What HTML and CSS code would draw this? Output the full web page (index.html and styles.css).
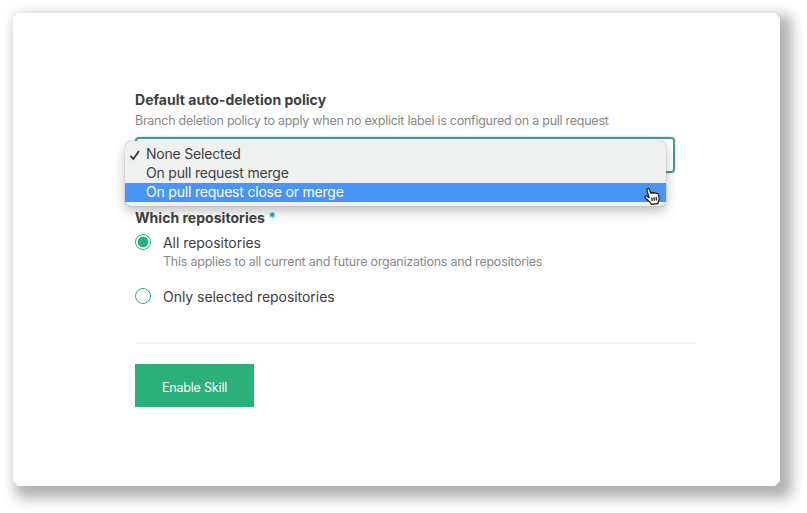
FILE: index.html
```html
<!DOCTYPE html>
<html lang="en">
<head>
<meta charset="utf-8">
<title>Enable Skill</title>
<link rel="stylesheet" href="styles.css">
</head>
<body>
<div class="window">
  <main class="card">
    <form class="form">
      <h2 class="label">Default auto-deletion policy</h2>
      <p class="hint">Branch deletion policy to apply when no explicit label is configured on a pull request</p>
      <div class="select">
        <div class="menu">
          <div class="option"><svg class="check" viewBox="0 0 12 12"><path d="M1.5 6.7 4.3 10 10 2"/></svg>None Selected</div>
          <div class="option">On pull request merge</div>
          <div class="option active">On pull request close or merge</div>
          <svg class="pointer" viewBox="0 0 18 20"><path d="M6.1 11.6 4 4.6C3.4 2.5 5.7 1.6 6.5 3.5L8 7.4C8.7 6.3 10.1 6.5 10.6 7.3 11.4 6.4 12.7 6.7 13.1 7.6 14.2 7 15.4 7.6 15.6 8.8L16.1 12.3C16.3 14 15.2 15.3 15 17.5L8.5 18.3C7.5 16.2 4.5 14.3 2.3 12 1.2 10.4 2.9 9.3 4.3 10.4Z"/><path d="M8.8 11.5 9.2 15M11 11.3 11.3 14.8M13.2 11 13.4 14.5"/></svg>
        </div>
      </div>
      <h2 class="label repos">Which repositories <span class="required">*</span></h2>
      <div class="choice">
        <span class="radio checked"></span>
        <div><div class="name">All repositories</div><p class="hint small">This applies to all current and future organizations and repositories</p></div>
      </div>
      <div class="choice second">
        <span class="radio"></span>
        <div class="name">Only selected repositories</div>
      </div>
      <hr class="rule">
      <button class="button" type="button">Enable Skill</button>
    </form>
  </main>
</div>
</body>
</html>
```
FILE: styles.css
```css
* { box-sizing: border-box; }
body { margin: 0; background: #fff; font-family: Inter, "Liberation Sans", sans-serif; color: #404040; overflow: hidden; }
.window { width: 807px; height: 513px; padding: 13px 27px 27px 13px; }
.card { height: 473px; background: #fff; padding: 77px 83px 0 122px; border-radius: 5px; corner-shape: bevel; box-shadow: 7px 7px 13px 5px rgba(0,0,0,.31); }
.label, .hint { margin: 0; white-space: nowrap; }
.label { font-size: 14px; line-height: 20px; font-weight: 700; letter-spacing: .03px; }
.hint { font-size: 12.5px; line-height: 21px; letter-spacing: -.26px; color: #888; }
.select { position: relative; width: 540px; height: 36px; margin-top: 6px; border: 2px solid #4b9898; border-radius: 4px; box-shadow: 0 0 2px #8fc3c1; }
.menu { position: absolute; left: -12px; top: 2px; width: 541px; height: 65px; padding-top: 4px; border-radius: 6px; background: #eff0f0; box-shadow: 0 0 1px rgba(0,0,0,.5), 0 5px 12px rgba(0,0,0,.25); }
.option { position: relative; height: 19px; padding-left: 21px; font-size: 14px; line-height: 18px; letter-spacing: -.2px; white-space: nowrap; color: #404040; }
.active { color: #fff; background: #4994f8; }
.check { position: absolute; left: 4px; top: 4px; width: 12px; height: 12px; fill: none; stroke: #333; stroke-width: 1.7; }
.pointer { position: absolute; left: 518px; top: 45px; width: 18px; height: 20px; fill: #fff; stroke: #222; stroke-width: 1.3; stroke-linejoin: round; }
.repos { margin-top: 35px; }
.required { color: #2bb07b; }
.choice { display: flex; gap: 12px; margin-top: 5px; }
.radio { width: 16px; height: 16px; margin-top: 1px; border: 1px solid #2bb07b; border-radius: 50%; }
.checked { background: radial-gradient(circle, #2bb07b 5px, #fff 5.8px); }
.name { font-size: 14px; line-height: 20px; letter-spacing: -.04px; white-space: nowrap; }
.small { line-height: 18px; letter-spacing: -.23px; }
.second { margin-top: 16px; }
.rule { height: 2px; border: 0; margin: 35px 0 20px; background: #f3f3f3; }
.button { display: block; width: 119px; height: 43px; padding: 4px 0 0; border: 0; background: #2bb07b; color: #fff; font: 12.5px Inter, "Liberation Sans", sans-serif; letter-spacing: -.18px; }
```
